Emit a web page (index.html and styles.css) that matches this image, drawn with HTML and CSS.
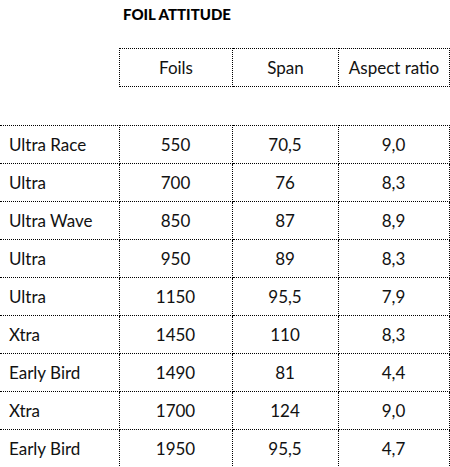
FILE: index.html
```html
<!DOCTYPE html>
<html>
  <head>
    <meta charset="UTF-8">
    <meta name="viewport" content="width=device-width, initial-scale=1.0">
    <title>Foil Attitude</title>
    <link rel="stylesheet" href="styles.css">
  </head>
  <body>
    <div class="sheet">
      <h1 class="title">FOIL ATTITUDE</h1>

      <!-- 表头单独一张表 -->
      <table class="head">
        <colgroup>
          <col class="w2"><col class="w3"><col class="w4">
        </colgroup>
        <tr>
          <td>Foils</td>
          <td>Span</td>
          <td>Aspect ratio</td>
        </tr>
      </table>

      <table class="data">
        <colgroup>
          <col class="w1"><col class="w2"><col class="w3"><col class="w4">
        </colgroup>
        <tr><td class="name">Ultra Race</td><td>550</td><td>70,5</td><td>9,0</td></tr>
        <tr><td class="name">Ultra</td><td>700</td><td>76</td><td>8,3</td></tr>
        <tr><td class="name">Ultra Wave</td><td>850</td><td>87</td><td>8,9</td></tr>
        <tr><td class="name">Ultra</td><td>950</td><td>89</td><td>8,3</td></tr>
        <tr><td class="name">Ultra</td><td>1150</td><td>95,5</td><td>7,9</td></tr>
        <tr><td class="name">Xtra</td><td>1450</td><td>110</td><td>8,3</td></tr>
        <tr><td class="name">Early Bird</td><td>1490</td><td>81</td><td>4,4</td></tr>
        <tr><td class="name">Xtra</td><td>1700</td><td>124</td><td>9,0</td></tr>
        <tr><td class="name">Early Bird</td><td>1950</td><td>95,5</td><td>4,7</td></tr>
      </table>
    </div>
  </body>
</html>
```

FILE: styles.css
```css
* {
  margin: 0;
  padding: 0;
}

body {
  background-color: #fff;
  color: #111;
  font-family: Lato, "Liberation Sans", sans-serif;
  font-size: 17px;
}

.sheet {
  width: 450px;
  padding-top: 5px;
}

.title {
  padding-left: 123px;
  font-size: 15px;
  font-weight: 900;
  line-height: 18px;
  color: #000;
}

table {
  border-collapse: collapse;
  table-layout: fixed;
}

td {
  height: 37px;
  padding: 0;
  border: 1px dotted #000;
  text-align: center;
  vertical-align: middle;
}

.head {
  margin: 25px 0 0 119px;
  width: 330px;
}

.data {
  margin-top: 38px;
  width: 449px;
}

.data tr td:first-child {
  border-left: none;
}

.w1 {
  width: 119px;
}
.w2 {
  width: 113px;
}
.w3 {
  width: 106px;
}
.w4 {
  width: 111px;
}

.name {
  padding-left: 9px;
  text-align: left;
}
```
